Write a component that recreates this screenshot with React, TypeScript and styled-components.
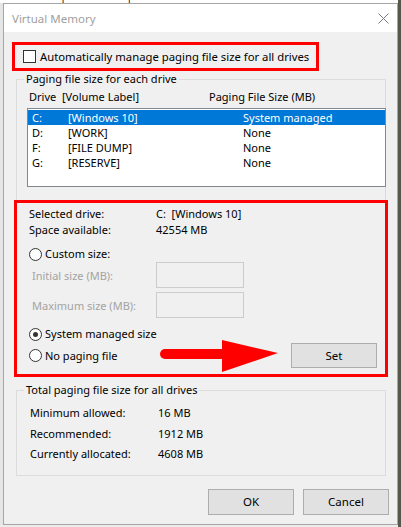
import * as React from "react";
import styled, { createGlobalStyle } from "styled-components";

const GlobalStyle = createGlobalStyle`
  html, body {
    margin: 0;
    padding: 0;
    background: #e6e6e6;
  }
  body {
    font-family: "Noto Sans", "Liberation Sans", sans-serif;
    font-size: 11px;
    color: #000;
  }
`;

const Desktop = styled.div`
  display: flex;
  width: 401px;
  height: 527px;
  overflow: hidden;
`;

const Column = styled.div`
  display: flex;
  flex-direction: column;
  width: 398px;
  flex: none;
`;

const TabStrip = styled.div`
  height: 3px;
  overflow: hidden;
  background: #fff;
`;

const TabStripText = styled.div`
  margin-top: -11px;
  line-height: 14px;
  white-space: nowrap;
  word-spacing: 2px;
`;

const BackStrip = styled.div`
  flex: 1;
  background: #ececec;
`;

const RightStrip = styled.div`
  flex: 1;
  background: #55594a;
`;

const Window = styled.div`
  margin-left: 3px;
  width: 395px;
  height: 522px;
  box-sizing: border-box;
  border: 1px solid #a6a6a6;
  background: #f0f0f0;
  display: flex;
  flex-direction: column;
  box-shadow: 1px 1px 2px rgba(0, 0, 0, 0.15);
`;

const TitleBar = styled.div`
  height: 28px;
  flex: none;
  background: #fff;
  display: flex;
  align-items: center;
  justify-content: space-between;
  padding: 0 8px;
`;

const Title = styled.span`
  color: #a0a0a0;
  font-size: 11.5px;
`;

const Body = styled.div`
  display: flex;
  flex-direction: column;
  padding-left: 8px;
  white-space: nowrap;
`;

const RedBox = styled.div<{ $mt: number }>`
  position: relative;
  margin-top: ${p => p.$mt}px;
  border: 3px solid #ff0000;
  box-sizing: border-box;
`;

const AutoBox = styled(RedBox)`
  width: 307px;
  height: 29px;
  display: flex;
  align-items: center;
  padding-left: 8px;
  gap: 4px;
  font-size: 11.3px;
`;

const CheckBox = styled.span`
  width: 13px;
  height: 13px;
  box-sizing: border-box;
  border: 1px solid #333;
  background: #fff;
  flex: none;
`;

const Group = styled.div<{ $mt: number; $open?: boolean }>`
  margin-top: ${p => p.$mt}px;
  margin-left: 4px;
  width: 370px;
  box-sizing: border-box;
  border: 1px solid #dcdcdc;
  border-bottom: ${p => (p.$open ? "none" : "1px solid #dcdcdc")};
  display: flex;
  flex-direction: column;
`;

const Legend = styled.span`
  align-self: flex-start;
  margin: -8px 0 0 7px;
  padding: 0 2px;
  line-height: 14px;
  background: #f0f0f0;
`;

const ListHeader = styled.div`
  display: flex;
  margin-top: 4px;
  padding-left: 12px;
  line-height: 14px;
`;

const HeadCell = styled.span<{ $w?: number }>`
  width: ${p => (p.$w ? `${p.$w}px` : "auto")};
  flex: none;
`;

const ListBox = styled.div`
  margin: 4px 0 0 10px;
  width: 359px;
  height: 79px;
  box-sizing: border-box;
  border: 1px solid #828790;
  background: #fff;
  padding-top: 1px;
`;

const ListRow = styled.div<{ $selected?: boolean }>`
  display: flex;
  height: 15px;
  line-height: 15px;
  padding-left: 4px;
  background: ${p => (p.$selected ? "#0078d7" : "transparent")};
  color: ${p => (p.$selected ? "#fff" : "#000")};
`;

const Cell = styled.span<{ $w?: number }>`
  width: ${p => (p.$w ? `${p.$w}px` : "auto")};
  flex: none;
`;

const DriveBox = styled(RedBox)`
  margin-left: -3px;
  width: 374px;
  display: flex;
  flex-direction: column;
  padding: 3px 0 6px 12px;
`;

const InfoRow = styled.div`
  display: flex;
  line-height: 16px;
`;

const InfoLabel = styled.span<{ $w: number; $disabled?: boolean }>`
  width: ${p => p.$w}px;
  flex: none;
  color: ${p => (p.$disabled ? "#a3a3a3" : "#000")};
`;

const RadioRow = styled.label<{ $mt: number }>`
  display: flex;
  align-items: center;
  gap: 3px;
  margin-top: ${p => p.$mt}px;
  line-height: 16px;
`;

const Radio = styled.span<{ $checked?: boolean }>`
  width: 13px;
  height: 13px;
  box-sizing: border-box;
  border-radius: 50%;
  border: 1px solid #333;
  background: #fff;
  display: flex;
  align-items: center;
  justify-content: center;
  flex: none;
  &::after {
    content: "";
    width: 5px;
    height: 5px;
    border-radius: 50%;
    background: ${p => (p.$checked ? "#333" : "transparent")};
  }
`;

const SizeRow = styled.div<{ $mt: number }>`
  display: flex;
  align-items: center;
  margin-top: ${p => p.$mt}px;
  padding-left: 3px;
`;

const SizeInput = styled.div`
  width: 88px;
  height: 26px;
  box-sizing: border-box;
  border: 1px solid #cccccc;
  background: #f0f0f0;
`;

const LastRow = styled.div`
  display: flex;
  align-items: center;
  margin-top: 1px;
  height: 25px;
`;

const Button = styled.button<{ $h?: number }>`
  width: 86px;
  height: ${p => p.$h ?? 26}px;
  box-sizing: border-box;
  border: 1px solid #adadad;
  background: #e1e1e1;
  font-family: inherit;
  font-size: 11.5px;
  color: #000;
  padding: 0;
`;

const SetButton = styled(Button)`
  margin-left: auto;
  margin-right: 8px;
`;

const Arrow = styled.svg`
  position: absolute;
  left: 141px;
  top: 135px;
`;

const TotalsList = styled.div`
  display: flex;
  flex-direction: column;
  margin-top: 6px;
  padding: 0 0 10px 13px;
`;

const TotalRow = styled.div`
  display: flex;
  line-height: 20.5px;
`;

const ButtonBar = styled.div`
  display: flex;
  justify-content: flex-end;
  gap: 9px;
  margin: 13px 8px 0 0;
`;

const drives = [
  { letter: "C:", label: "[Windows 10]", size: "System managed" },
  { letter: "D:", label: "[WORK]", size: "None" },
  { letter: "F:", label: "[FILE DUMP]", size: "None" },
  { letter: "G:", label: "[RESERVE]", size: "None" },
];

const totals = [
  ["Minimum allowed:", "16 MB"],
  ["Recommended:", "1912 MB"],
  ["Currently allocated:", "4608 MB"],
];

export default function App() {
  return (
    <>
      <GlobalStyle />
      <Desktop>
        <Column>
          <TabStrip>
            <TabStripText>ual Effects | Advanced | Data Execution Prevention</TabStripText>
          </TabStrip>
          <Window>
            <TitleBar>
              <Title>Virtual Memory</Title>
              <svg width="11" height="11" viewBox="0 0 11 11">
                <path d="M0.5 0.5 L10.5 10.5 M10.5 0.5 L0.5 10.5" stroke="#7a7a7a" strokeWidth="1" />
              </svg>
            </TitleBar>
            <Body>
              <AutoBox $mt={10}>
                <CheckBox />
                <span>Automatically manage paging file size for all drives</span>
              </AutoBox>

              <Group $mt={8} $open>
                <Legend>Paging file size for each drive</Legend>
                <ListHeader>
                  <HeadCell $w={33}>Drive</HeadCell>
                  <HeadCell $w={147}>[Volume Label]</HeadCell>
                  <HeadCell>Paging File Size (MB)</HeadCell>
                </ListHeader>
                <ListBox>
                  {drives.map((d, i) => (
                    <ListRow key={d.letter} $selected={i === 0}>
                      <Cell $w={36}>{d.letter}</Cell>
                      <Cell $w={175}>{d.label}</Cell>
                      <Cell>{d.size}</Cell>
                    </ListRow>
                  ))}
                </ListBox>

                <DriveBox $mt={13}>
                  <InfoRow>
                    <InfoLabel $w={127}>Selected drive:</InfoLabel>
                    <span>C:&nbsp;&nbsp;[Windows 10]</span>
                  </InfoRow>
                  <InfoRow>
                    <InfoLabel $w={127}>Space available:</InfoLabel>
                    <span>42554 MB</span>
                  </InfoRow>
                  <RadioRow $mt={8}>
                    <Radio />
                    <span>Custom size:</span>
                  </RadioRow>
                  <SizeRow $mt={0}>
                    <InfoLabel $w={124} $disabled>Initial size (MB):</InfoLabel>
                    <SizeInput />
                  </SizeRow>
                  <SizeRow $mt={4}>
                    <InfoLabel $w={124} $disabled>Maximum size (MB):</InfoLabel>
                    <SizeInput />
                  </SizeRow>
                  <RadioRow $mt={8}>
                    <Radio $checked />
                    <span>System managed size</span>
                  </RadioRow>
                  <LastRow>
                    <RadioRow $mt={0}>
                      <Radio />
                      <span>No paging file</span>
                    </RadioRow>
                    <SetButton $h={25}>Set</SetButton>
                  </LastRow>
                  <Arrow width="122" height="36" viewBox="0 0 122 36">
                    <rect x="2" y="11" width="66" height="10" rx="5" fill="#ff0000" />
                    <polygon points="64,2 120,15 64,34" fill="#ff0000" />
                  </Arrow>
                </DriveBox>
              </Group>

              <Group $mt={13}>
                <Legend>Total paging file size for all drives</Legend>
                <TotalsList>
                  {totals.map(([label, value]) => (
                    <TotalRow key={label}>
                      <InfoLabel $w={128}>{label}</InfoLabel>
                      <span>{value}</span>
                    </TotalRow>
                  ))}
                </TotalsList>
              </Group>

              <ButtonBar>
                <Button>OK</Button>
                <Button>Cancel</Button>
              </ButtonBar>
            </Body>
          </Window>
          <BackStrip />
        </Column>
        <RightStrip />
      </Desktop>
    </>
  );
}
